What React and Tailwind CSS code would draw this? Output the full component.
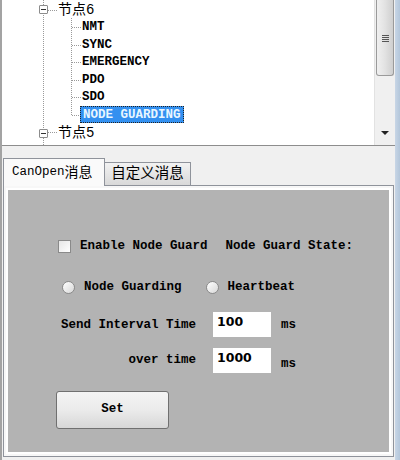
import React from 'react';

const mono = { fontFamily: '"Liberation Mono", "Noto Sans CJK SC", monospace' };

const children = ['NMT', 'SYNC', 'EMERGENCY', 'PDO', 'SDO', 'NODE GUARDING'];

const MinusBox = () => (
  <div className="w-[9px] h-[9px] border border-[#8c8c8c] bg-white flex items-center justify-center rounded-[1px]">
    <div className="w-[5px] h-px bg-[#333]" />
  </div>
);

const TreeLines = () => (
  <svg className="absolute inset-0 pointer-events-none" width="371" height="145">
    <g stroke="#9a9a9a" strokeWidth="1" strokeDasharray="1 1" shapeRendering="crispEdges">
      <line x1="41.5" y1="0" x2="41.5" y2="5" />
      <line x1="41.5" y1="15" x2="41.5" y2="128" />
      <line x1="41.5" y1="138" x2="41.5" y2="145" />
      <line x1="46" y1="10.5" x2="56" y2="10.5" />
      <line x1="46" y1="132.5" x2="56" y2="132.5" />
      <line x1="69.5" y1="18" x2="69.5" y2="115" />
      {[27.5, 45, 62.5, 80, 97.5, 115].map((y) => (
        <line key={y} x1="70" y1={y} x2="79" y2={y} />
      ))}
    </g>
  </svg>
);

const Tree = () => (
  <div className="relative flex-1 bg-white overflow-hidden">
    <TreeLines />
    <div className="relative pt-[1px]" style={mono}>
      <div className="h-[17.5px] flex items-center">
        <div className="w-[37px]" />
        <MinusBox />
        <div className="w-[10px]" />
        <span className="text-[14px] leading-none text-black">节点6</span>
      </div>
      {children.map((c) => (
        <div key={c} className="h-[17.5px] flex items-center pl-[78px]">
          {c === 'NODE GUARDING' ? (
            <span className="h-[17px] flex items-center px-[2px] bg-[#3390f0] text-[#e8f6ff] border border-dotted border-[#222] text-[12.5px] font-bold leading-none">
              {c}
            </span>
          ) : (
            <span className="px-[2px] text-[12.5px] font-bold leading-none text-black">{c}</span>
          )}
        </div>
      ))}
      <div className="h-[17.5px] flex items-center mt-[1px]">
        <div className="w-[37px]" />
        <MinusBox />
        <div className="w-[10px]" />
        <span className="text-[14px] leading-none text-black">节点5</span>
      </div>
    </div>
  </div>
);

const Scrollbar = () => (
  <div className="w-[21px] bg-[#f0f0f0] border-l border-[#e2e2e2] flex flex-col items-center">
    <div className="w-[18px] h-[76px] border border-t-0 border-[#9a9a9a] rounded-b-[3px] bg-gradient-to-r from-[#f0f0f0] via-[#e2e2e2] to-[#cfcfcf] flex flex-col items-center justify-center gap-[1px] pt-[2px]">
      {[0, 1, 2, 3].map((i) => (
        <div key={i} className="w-[7px] h-px bg-[#555]" />
      ))}
    </div>
    <div className="flex-1" />
    <svg width="8" height="5" className="mb-[9px]">
      <polygon points="0,0 8,0 4,4" fill="#222" />
    </svg>
  </div>
);

const Radio = () => (
  <div className="w-[13px] h-[13px] rounded-full border border-[#8a8a8a] bg-gradient-to-br from-white to-[#d8d8d8]" />
);

const Field = ({ value }) => (
  <div
    className="w-[58px] h-[25px] bg-white flex items-start pt-[4px] pl-[4px] text-[12.5px] text-black leading-none"
    style={{ fontFamily: '"DejaVu Sans", sans-serif' }}
  >
    {value}
  </div>
);

export default function App() {
  return (
    <div className="w-[400px] h-[460px] bg-[#f0f0f0] flex overflow-hidden">
      <div className="w-[2px] bg-[#a3a3a3]" />
      <div className="flex-1 flex flex-col">
        <div className="h-[146px] flex border-b border-[#8d8d8d]">
          <Tree />
          <Scrollbar />
        </div>

        {/* tabs */}
        <div className="h-[39px] flex items-end pl-[1px]" style={mono}>
          <div className="w-[102px] h-[28px] bg-[#fafafa] border border-b-0 border-[#8f939b] flex items-center pl-[8px] text-black relative top-px z-10">
            <span className="text-[12.5px] leading-none">CanOpen</span>
            <span className="text-[14px] leading-none">消息</span>
          </div>
          <div className="w-[86px] h-[23px] bg-gradient-to-b from-[#f2f2f2] to-[#d9d9d9] border border-l-0 border-b-0 border-[#8f939b] flex items-center justify-center text-[14.5px] leading-none text-black">
            自定义消息
          </div>
        </div>

        {/* panel */}
        <div className="ml-[1px] w-[391px] h-[272px] border border-[#8f939b] bg-[#f7f7f7] p-[2px]">
          <div className="h-full border-[2px] border-white bg-[#b3b3b3] pt-[48px] text-black" style={mono}>
            <div className="h-[16px] flex items-center pl-[50px] text-[12.5px] font-bold">
              <div className="w-[13px] h-[13px] border border-[#8a8a8a] bg-gradient-to-br from-[#e6e6e6] to-white" />
              <span className="ml-[9px]">Enable Node Guard</span>
              <span className="ml-[18px]">Node Guard State:</span>
            </div>
            <div className="h-[16px] mt-[25px] flex items-center pl-[54px] text-[12.5px] font-bold">
              <Radio />
              <span className="ml-[9px]">Node Guarding</span>
              <div className="ml-[24px]">
                <Radio />
              </div>
              <span className="ml-[9px]">Heartbeat</span>
            </div>
            <div className="mt-[17px] flex items-center pl-[50px] text-[12.5px] font-bold">
              <span className="w-[138px] text-right">Send Interval Time</span>
              <div className="ml-[17px] h-[26px] flex">
                <Field value="100" />
              </div>
              <span className="ml-[10px]">ms</span>
            </div>
            <div className="mt-[9px] flex items-center pl-[50px] text-[12.5px] font-bold">
              <span className="w-[138px] text-right">over time</span>
              <div className="ml-[17px]">
                <Field value="1000" />
              </div>
              <span className="ml-[10px] mt-[8px]">ms</span>
            </div>
            <div className="mt-[17px] pl-[48px]">
              <div className="w-[113px] h-[38px] rounded-[3px] border border-[#707070] bg-gradient-to-b from-[#f4f4f4] via-[#ebebeb] to-[#d7d7d7] flex items-center justify-center text-[12.5px] font-bold">
                Set
              </div>
            </div>
          </div>
        </div>
      </div>
      <div className="w-[5px] bg-gradient-to-r from-[#c8d6e6] to-[#b3c6da]" />
    </div>
  );
}
